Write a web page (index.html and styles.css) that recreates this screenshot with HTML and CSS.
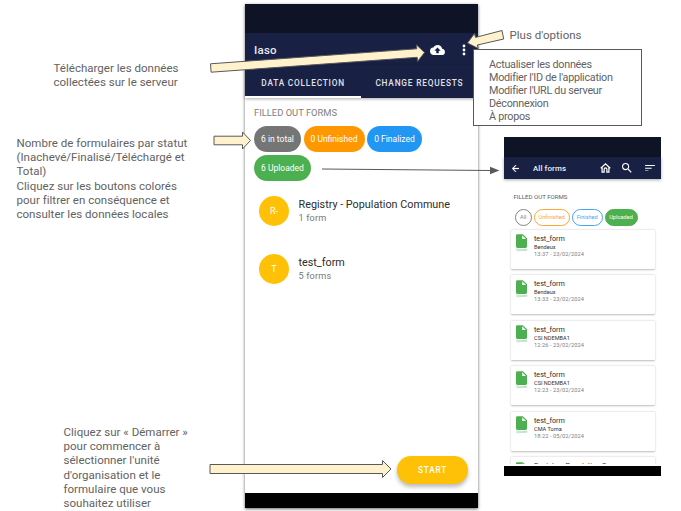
FILE: index.html
```
<!DOCTYPE html>
<html lang="fr">
<head>
<meta charset="utf-8">
<title>Iaso</title>
<link rel="stylesheet" href="styles.css">
</head>
<body>
<main class="board">
  <p class="note note-upload">Télécharger les données<br>collectées sur le serveur</p>
  <p class="note note-status">Nombre de formulaires par statut<br>(Inachevé/Finalisé/Téléchargé et<br>Total)<br>Cliquez sur les boutons colorés<br>pour filtrer en conséquence et<br>consulter les données locales</p>
  <p class="note note-start">Cliquez sur « Démarrer »<br>pour commencer à<br>sélectionner l'unité<br>d'organisation et le<br>formulaire que vous<br>souhaitez utiliser</p>
  <p class="note note-more">Plus d'options</p>

  <section class="phone">
    <div class="status"></div>
    <header class="appbar">
      <h1>Iaso</h1>
      <svg class="cloud" viewBox="0 4 24 16"><path fill="#fff" d="M19.35 10.04A7.49 7.49 0 0 0 12 4C9.11 4 6.6 5.64 5.35 8.04A5.994 5.994 0 0 0 0 14c0 3.31 2.69 6 6 6h13c2.76 0 5-2.24 5-5 0-2.64-2.05-4.78-4.65-4.96zM14 13v4h-4v-4H7l5-5 5 5h-3z"/></svg>
      <svg class="dots" viewBox="0 0 4 12"><g fill="#fff"><circle cx="2" cy="2" r="1.4"/><circle cx="2" cy="6" r="1.4"/><circle cx="2" cy="10" r="1.4"/></g></svg>
    </header>
    <nav class="tabs"><span class="tab active">DATA COLLECTION</span><span class="tab">CHANGE REQUESTS</span></nav>
    <div class="content">
      <h2>FILLED OUT FORMS</h2>
      <div class="chips">
        <span class="chip total">6 in total</span><span class="chip unfinished">0 Unfinished</span><span class="chip finalized">0 Finalized</span><span class="chip uploaded">6 Uploaded</span>
      </div>
      <div class="group"><span class="avatar">R-</span><div><b>Registry - Population Commune</b><small>1 form</small></div></div>
      <div class="group"><span class="avatar">T</span><div><b>test_form</b><small>5 forms</small></div></div>
      <button class="start">START</button>
    </div>
    <div class="navbar"></div>
  </section>

  <section class="options">
    <ul><li>Actualiser les données</li><li>Modifier l'ID de l'application</li><li>Modifier l'URL du serveur</li><li>Déconnexion</li><li>À propos</li></ul>
  </section>

  <section class="mini">
    <div class="mini-status"></div>
    <header class="mini-bar">
      <svg class="back" viewBox="4 4 16 16"><path fill="#fff" stroke="#fff" stroke-width=".6" d="M20 11H7.83l5.59-5.59L12 4l-8 8 8 8 1.41-1.41L7.83 13H20z"/></svg>
      <h3>All forms</h3>
      <svg class="home" viewBox="0 0 24 22"><path d="M1.5 11.5 12 2l10.5 9.500M4.500 10v10H9v-6.500a3 3 0 0 1 6 0V20h4.500V10" fill="none" stroke="#fff" stroke-width="2.700"/></svg>
      <svg class="search" viewBox="3 3 18 18"><path fill="#fff" d="M15.500 14h-.79l-.28-.27A6.471 6.471 0 0 0 16 9.500 6.500 6.500 0 1 0 9.500 16c1.610 0 3.090-.59 4.230-1.570l.27.28v.79l5 4.990L20.490 19zm-6 0C7.010 14 5 11.990 5 9.500S7.010 5 9.500 5 14 7.010 14 9.500 11.990 14 9.500 14z"/></svg>
      <svg class="sort" viewBox="0 0 18 12"><path fill="#fff" d="M0 0h18v2H0zM0 5h12v2H0zM0 10h6v2H0z"/></svg>
    </header>
    <div class="mini-content">
      <h4>FILLED OUT FORMS</h4>
      <div class="filters"><span class="filter all">All</span><span class="filter un">Unfinished</span><span class="filter fin">Finished</span><span class="filter up">Uploaded</span></div>
      <div class="cards">
        <article class="card"><div class="file"><svg viewBox="0 0 16 20"><path d="M2 0h8l6 6v12a2 2 0 0 1-2 2H2a2 2 0 0 1-2-2V2a2 2 0 0 1 2-2zm7 1.500V7h5.500z"/></svg><i>Uploaded</i></div><div class="info"><b>test_form</b><span>Bendeux</span><time>13:37 - 23/02/2024</time></div></article>
        <article class="card"><div class="file"><svg viewBox="0 0 16 20"><path d="M2 0h8l6 6v12a2 2 0 0 1-2 2H2a2 2 0 0 1-2-2V2a2 2 0 0 1 2-2zm7 1.500V7h5.500z"/></svg><i>Uploaded</i></div><div class="info"><b>test_form</b><span>Bendeux</span><time>13:33 - 23/02/2024</time></div></article>
        <article class="card"><div class="file"><svg viewBox="0 0 16 20"><path d="M2 0h8l6 6v12a2 2 0 0 1-2 2H2a2 2 0 0 1-2-2V2a2 2 0 0 1 2-2zm7 1.500V7h5.500z"/></svg><i>Uploaded</i></div><div class="info"><b>test_form</b><span>CSI NDEMBA1</span><time>12:26 - 23/02/2024</time></div></article>
        <article class="card"><div class="file"><svg viewBox="0 0 16 20"><path d="M2 0h8l6 6v12a2 2 0 0 1-2 2H2a2 2 0 0 1-2-2V2a2 2 0 0 1 2-2zm7 1.500V7h5.500z"/></svg><i>Uploaded</i></div><div class="info"><b>test_form</b><span>CSI NDEMBA1</span><time>12:23 - 23/02/2024</time></div></article>
        <article class="card"><div class="file"><svg viewBox="0 0 16 20"><path d="M2 0h8l6 6v12a2 2 0 0 1-2 2H2a2 2 0 0 1-2-2V2a2 2 0 0 1 2-2zm7 1.500V7h5.500z"/></svg><i>Uploaded</i></div><div class="info"><b>test_form</b><span>CMA Toma</span><time>18:22 - 05/02/2024</time></div></article>
        <article class="card"><div class="file"><svg viewBox="0 0 16 20"><path d="M2 0h8l6 6v12a2 2 0 0 1-2 2H2a2 2 0 0 1-2-2V2a2 2 0 0 1 2-2zm7 1.500V7h5.500z"/></svg></div><div class="info"><b>Registry - Population C</b></div></article>
      </div>
    </div>
    <div class="mini-nav"></div>
  </section>

  <svg class="arrows" viewBox="0 0 681 511">
    <g fill="#fff2cc" stroke="#595959" stroke-width="1">
      <path d="M210.500 63.800 416.800 48.800 416.400 44.800 424.500 52.500 417.500 61.500 417.200 57.300 211.100 72.200z"/>
      <path d="M214 136.200H242.500V132L250.500 140.500 242.500 149V144.800H214z"/>
      <path d="M210 464.500H382.500V460.500L391 469 382.500 477.500V473.500H210z"/>
      <path d="M502 30.500 475.500 37.400 474.500 33.500 467.500 43 478.300 48.500 477.300 45 503.700 39z"/>
    </g>
    <path d="M322 169 490 170.500" stroke="#595959" stroke-width="1.200"/>
    <path d="M490 166.800 499.500 170.600 490 174.300z" fill="#595959"/>
  </svg>
</main>
</body>
</html>
```
FILE: styles.css
```
* { box-sizing: border-box; }
body { margin: 0; background: #fff; font-family: Roboto, "Liberation Sans", sans-serif; }
h1, h2, h3, h4, p, ul { margin: 0; padding: 0; font-weight: 400; }
ul { list-style: none; }
svg { display: block; flex: none; }
.board { position: relative; width: 681px; height: 511px; overflow: hidden; }

.note { position: absolute; font-size: 11.5px; line-height: 14.2px; letter-spacing: .02px; color: #626262; white-space: nowrap; }
.note-upload { left: 53.5px; top: 61px; }
.note-status { left: 16.5px; top: 136px; }
.note-start { left: 63.5px; top: 425px; }
.note-more { left: 509.5px; top: 27.5px; }

.phone { position: absolute; left: 245px; top: 4px; width: 232.500px; height: 503.500px; display: flex; flex-direction: column; background: #fff; box-shadow: 0 1px 3px #0009; }
.status { height: 29px; background: #0e1325; }
.appbar { height: 32px; background: #182043; color: #e8e9ef; display: flex; align-items: center; padding: 2px 11.500px 0 9px; }
.appbar h1 { flex: 1; font-size: 11.500px; font-weight: 500; letter-spacing: .25px; }
.cloud { width: 15px; height: 10px; }
.dots { width: 4px; height: 12px; margin-left: 17.500px; }
.tabs { height: 33px; display: flex; background: #182043; color: #e0e1e9; box-shadow: 0 1px 3px #0005; }
.tab { width: 50%; display: flex; align-items: center; justify-content: center; font-size: 8.300px; font-weight: 500; letter-spacing: .8px; white-space: nowrap; border-bottom: 2px solid transparent; padding-top: 4px; }
.tab.active { border-color: #fff; }
.content { flex: 1; position: relative; padding: 8.500px 9px 0; }
.content h2 { font-size: 9.400px; line-height: 12px; color: #808080; }
.chips { display: flex; flex-wrap: wrap; gap: 2.500px; margin: 7.500px 0 15px; }
.chip { height: 26.300px; border-radius: 14px; display: flex; justify-content: center; align-items: center; font-size: 8.500px; color: #fff; white-space: nowrap; }
.total { width: 47px; background: #757575; }
.unfinished { width: 61px; background: #ff9800; }
.finalized { width: 55px; background: #2196f3; }
.uploaded { width: 57px; background: #4caf50; }
.group { display: flex; align-items: center; gap: 9.500px; height: 30px; margin: 0 0 28px 5px; white-space: nowrap; }
.avatar { width: 30px; height: 30px; border-radius: 50%; display: flex; align-items: center; justify-content: center; background: #ffc107; color: #fff; font-size: 9px; }
.group b, .group small { display: block; }
.group b { font-size: 10.800px; line-height: 14px; font-weight: 400; color: #2c2c2c; }
.group small { font-size: 9.200px; line-height: 12px; color: #7a7a7a; letter-spacing: .15px; }
.start { position: absolute; right: 9.500px; bottom: 9px; width: 71px; height: 28.500px; padding: 1px 0 0; border: 0; border-radius: 15px; background: #ffc107; color: #fff; font: 500 8.300px Roboto, sans-serif; letter-spacing: .8px; box-shadow: 0 3px 4px #0004; }
.navbar { height: 14.500px; background: #000; }

.options { position: absolute; left: 473px; top: 49px; width: 169px; height: 77px; background: #fff; border: 1px solid #595959; padding: 9px 0 0 15px; }
.options li { font-size: 10.800px; line-height: 12.900px; letter-spacing: -.27px; color: #626262; white-space: nowrap; }

.mini { position: absolute; left: 504px; top: 137px; width: 157px; height: 339px; display: flex; flex-direction: column; background: #fff; }
.mini-status { height: 20px; background: #0e1325; }
.mini-bar { height: 22px; background: #182043; color: #f0f0f5; display: flex; align-items: center; padding: 0 6.500px 0 8px; box-shadow: 0 1px 3px #0005; }
.mini-bar h3 { flex: 1; margin-left: 14px; font-size: 7.900px; font-weight: 500; letter-spacing: .1px; }
.back { width: 7px; height: 7px; }
.home { width: 11px; height: 10px; }
.search { width: 10px; height: 10px; margin-left: 11.500px; }
.sort { width: 10px; height: 6.500px; margin-left: 12.500px; }
.mini-content { height: 285px; overflow: hidden; padding-top: 14px; }
.mini-content h4 { margin-left: 9.500px; font-size: 6.100px; line-height: 8px; color: #606060; }
.filters { display: flex; gap: 2px; margin: 7.500px 0 3.500px 11px; }
.filter { height: 17.500px; border: .7px solid; border-radius: 9px; display: flex; align-items: center; justify-content: center; font-size: 5.600px; }
.all { width: 16.500px; color: #858585; }
.un { width: 36.500px; color: #ffa733; }
.fin { width: 30.500px; color: #42a5f5; }
.up { width: 33px; color: #fff; background: #4caf50; border-color: #4caf50; }
.cards { display: grid; gap: 6.500px; margin: 0 6.500px; }
.card { height: 39px; padding: 4px 6px 0 5.500px; display: flex; gap: 7px; background: #fff; border-radius: 1px; box-shadow: 0 .5px 2px #0004; white-space: nowrap; }
.file { width: 11px; flex: none; margin-top: .5px; }
.file svg { width: 11px; height: 14px; fill: #4caf50; }
.file i { display: block; font-size: 2.600px; line-height: 5px; font-style: normal; text-align: center; color: #7cc67f; }
.info b, .info span, .info time { display: block; font-weight: 400; }
.info b { font-size: 7.200px; line-height: 9px; color: #2c2c2c; }
.info span { font-size: 5.600px; line-height: 8px; color: #333; }
.info time { font-size: 5.700px; line-height: 7px; color: #808080; letter-spacing: .06px; }
.mini-nav { height: 10px; margin-top: auto; background: #000; }

.arrows { position: absolute; left: 0; top: 0; width: 681px; height: 511px; pointer-events: none; }
```
